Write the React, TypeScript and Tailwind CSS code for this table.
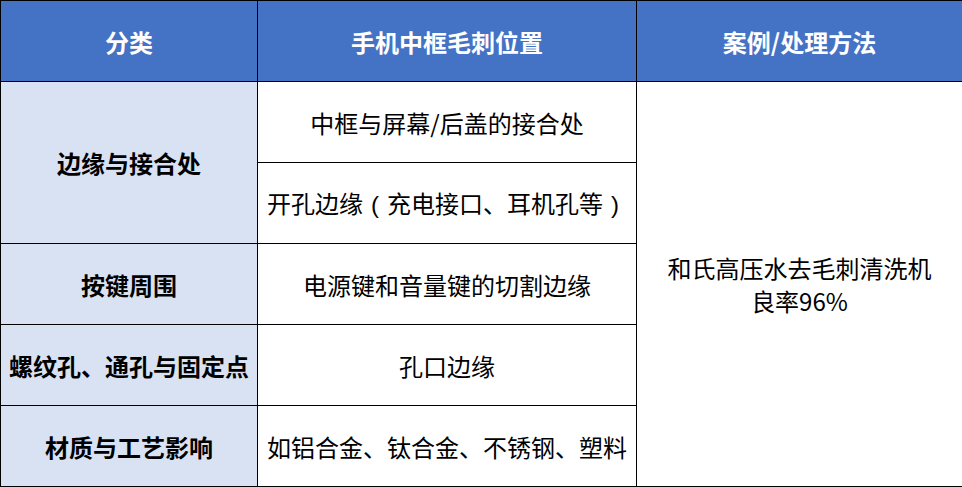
const FONT = { fontFamily: '"Noto Sans CJK SC", "Noto Sans", sans-serif' };

const HEAD = ["分类", "手机中框毛刺位置", "案例/处理方法"];

// Full-width parens are centred in their cell in the reference font.
function Paren({ ch }: { ch: string }) {
  return (
    <span className="inline-block w-[24px] text-center" style={{ fontFamily: '"Liberation Sans", sans-serif' }}>
      {ch}
    </span>
  );
}

export default function App() {
  return (
    <div className="w-[962px] h-[487px] bg-white" style={FONT}>
      <table className="w-[962px] border-collapse table-fixed text-[24px] leading-[33px] text-black">
        <colgroup>
          <col className="w-[257px]" />
          <col className="w-[379px]" />
          <col className="w-[326px]" />
        </colgroup>
        <thead>
          <tr className="h-[81px] bg-[#4472c4]">
            {HEAD.map((h) => (
              <th key={h} className="border border-black text-white font-bold text-center">
                {h}
              </th>
            ))}
          </tr>
        </thead>
        <tbody>
          <tr className="h-[81px]">
            <td rowSpan={2} className="border border-black bg-[#d9e2f3] font-bold text-center">
              边缘与接合处
            </td>
            <td className="border border-black text-center">中框与屏幕/后盖的接合处</td>
            <td rowSpan={5} className="border border-black text-center">
              和氏高压水去毛刺清洗机
              <br />
              良率96%
            </td>
          </tr>
          <tr className="h-[81px]">
            <td className="border border-black text-center whitespace-nowrap">
              开孔边缘<Paren ch="(" />充电接口、耳机孔等<Paren ch=")" />
            </td>
          </tr>
          <tr className="h-[81px]">
            <td className="border border-black bg-[#d9e2f3] font-bold text-center">按键周围</td>
            <td className="border border-black text-center">电源键和音量键的切割边缘</td>
          </tr>
          <tr className="h-[81px]">
            <td className="border border-black bg-[#d9e2f3] font-bold text-center whitespace-nowrap">
              螺纹孔、通孔与固定点
            </td>
            <td className="border border-black text-center">孔口边缘</td>
          </tr>
          <tr className="h-[81px]">
            <td className="border border-black bg-[#d9e2f3] font-bold text-center">材质与工艺影响</td>
            <td className="border border-black text-center whitespace-nowrap">如铝合金、钛合金、不锈钢、塑料</td>
          </tr>
        </tbody>
      </table>
    </div>
  );
}
